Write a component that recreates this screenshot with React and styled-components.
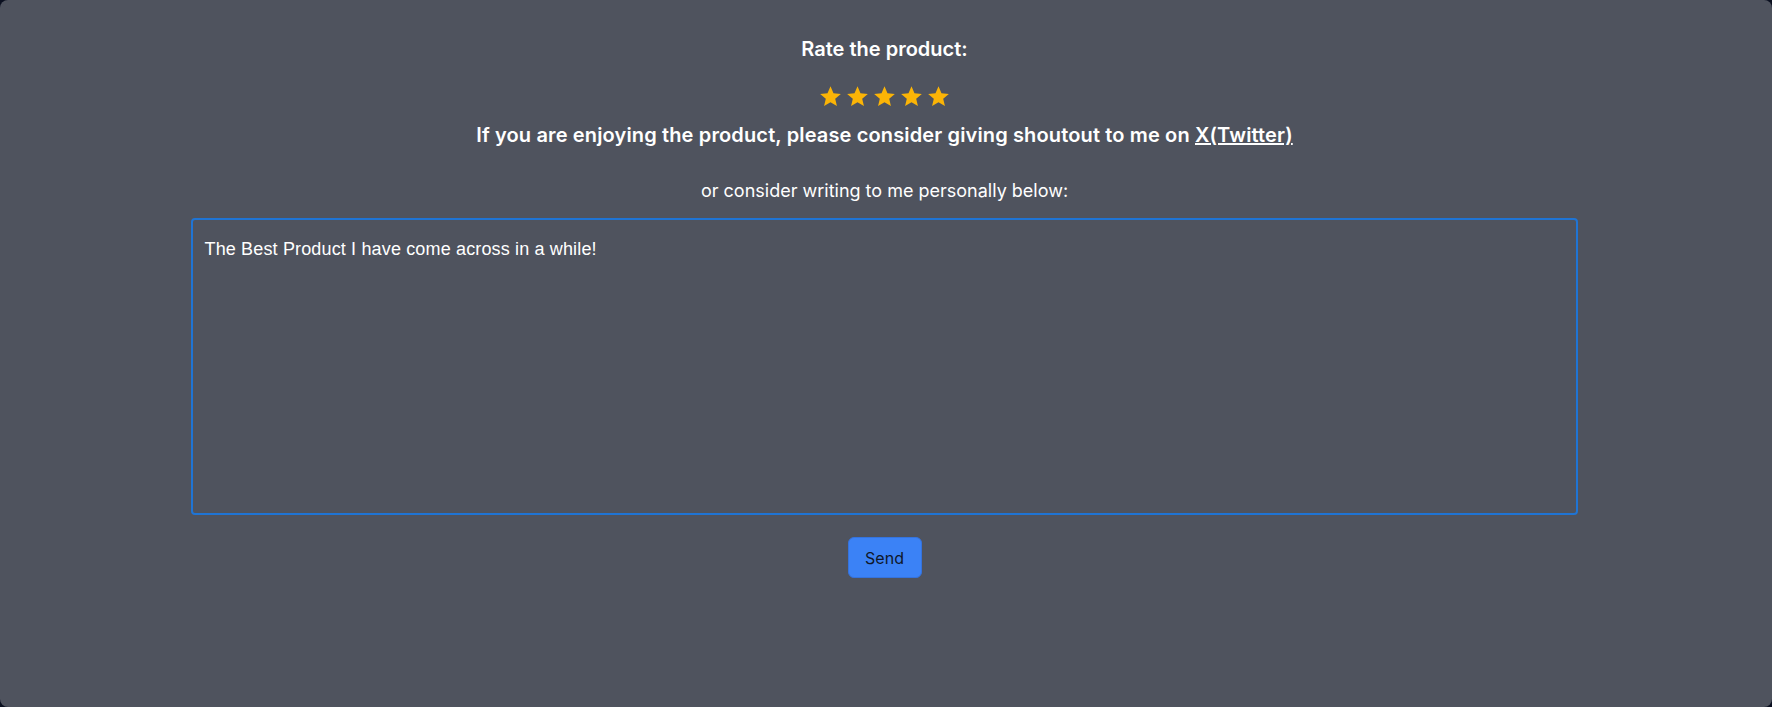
import React, { useState } from "react";
import styled, { createGlobalStyle } from "styled-components";

const GlobalStyle = createGlobalStyle`
    html, body {
        margin: 0;
        padding: 0;
        background: #0b1020;
    }
    body {
        font-family: Inter, "Noto Sans", sans-serif;
    }
`;

const Star = ({ filled }) => (
    <svg width="23" height="23" viewBox="0 0 24 24">
        <path
            d="M12 1.4l3.1 7.2 7.7.7-5.9 5.1 1.8 7.6L12 18l-6.7 4 1.8-7.6-5.9-5.1 7.7-.7z"
            fill={filled ? "#fbb406" : "#9ca3af"}
        />
    </svg>
);

const App = () => {
    const [rating, setRating] = useState(5);
    const [message, setMessage] = useState(
        "The Best Product I have come across in a while!"
    );

    return (
        <>
            <GlobalStyle />
            <Card>
                <Title>Rate the product:</Title>
                <Stars>
                    {[1, 2, 3, 4, 5].map((n) => (
                        <StarButton key={n} onClick={() => setRating(n)}>
                            <Star filled={n <= rating} />
                        </StarButton>
                    ))}
                </Stars>
                <Shoutout>
                    If you are enjoying the product, please consider giving
                    shoutout to me on <a href="#">X(Twitter)</a>
                </Shoutout>
                <Hint>or consider writing to me personally below:</Hint>
                <Message
                    value={message}
                    onChange={(e) => setMessage(e.target.value)}
                />
                <SendButton>Send</SendButton>
            </Card>
        </>
    );
};

export default App;

const Card = styled.div`
    box-sizing: border-box;
    display: flex;
    flex-direction: column;
    align-items: center;
    width: 100%;
    height: 707px;
    padding: 35px 3px 0 0;
    background-color: #4f535e;
    border-radius: 8px;
    color: #fff;
`;

const Title = styled.h2`
    margin: 0;
    font-size: 20px;
    line-height: 28px;
    font-weight: 600;
`;

const Stars = styled.div`
    display: flex;
    gap: 4px;
    margin-top: 22px;
`;

const StarButton = styled.span`
    display: block;
    width: 23px;
    height: 23px;
    cursor: pointer;
    svg {
        display: block;
    }
`;

const Shoutout = styled.p`
    margin: 13px 0 0;
    font-size: 20px;
    line-height: 28px;
    font-weight: 600;
    letter-spacing: 0.14px;
    a {
        color: #fff;
        text-decoration: underline;
    }
`;

const Hint = styled.p`
    margin: 29px 0 0;
    font-size: 18px;
    line-height: 26px;
`;

const Message = styled.textarea`
    box-sizing: border-box;
    width: 1387px;
    height: 297px;
    margin: 14px 1px 0 0;
    padding: 16px 12px 12px;
    background: transparent;
    border: 2px solid #1f74d4;
    border-radius: 4px;
    color: #fff;
    font-family: "Liberation Sans", Arial, sans-serif;
    font-size: 18px;
    line-height: 26px;
    letter-spacing: 0.15px;
    resize: none;
    outline: none;
`;

const SendButton = styled.button`
    margin-top: 22px;
    width: 74px;
    height: 41px;
    background-color: #3b82f6;
    border: 1px solid #3573dd;
    border-radius: 6px;
    color: #0f172a;
    font-family: Inter, sans-serif;
    font-size: 16px;
    cursor: pointer;
`;
